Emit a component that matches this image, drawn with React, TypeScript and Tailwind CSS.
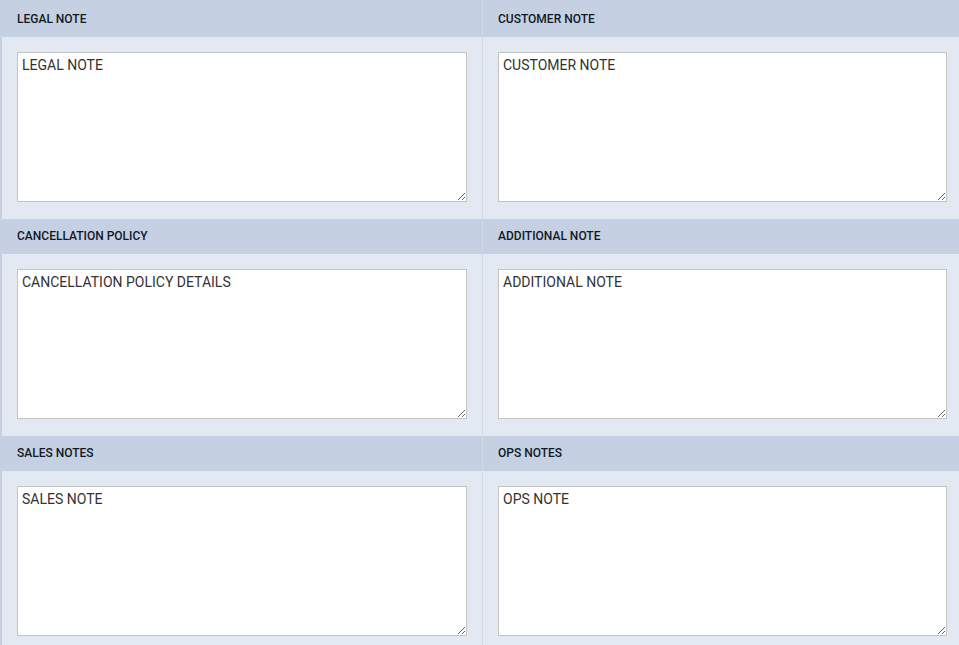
const rows = [
  [
    { title: "LEGAL NOTE", value: "LEGAL NOTE" },
    { title: "CUSTOMER NOTE", value: "CUSTOMER NOTE" },
  ],
  [
    { title: "CANCELLATION POLICY", value: "CANCELLATION POLICY DETAILS" },
    { title: "ADDITIONAL NOTE", value: "ADDITIONAL NOTE" },
  ],
  [
    { title: "SALES NOTES", value: "SALES NOTE" },
    { title: "OPS NOTES", value: "OPS NOTE" },
  ],
];

function NoteCell({
  title,
  value,
  first,
  left,
}: {
  title: string;
  value: string;
  first: boolean;
  left: boolean;
}) {
  return (
    <div
      className={
        left
          ? "flex flex-col border-l-2 border-r border-l-[#c5d1e2] border-r-[#d2dae6]"
          : "flex flex-col"
      }
    >
      <div
        className={
          first
            ? "flex h-[37px] items-center bg-[#c5d1e2] pl-[15px] text-[12px] font-medium text-[#111827]"
            : "flex h-[35px] items-center bg-[#c5d1e2] pb-px pl-[15px] text-[12px] font-medium text-[#111827]"
        }
      >
        {title}
      </div>
      <div
        className={
          left
            ? "bg-[#e2e9f3] pb-[17px] pl-[15px] pr-[15px] pt-[15px]"
            : "bg-[#e2e9f3] pb-[17px] pl-[15px] pr-[12px] pt-[15px]"
        }
      >
        <textarea
          defaultValue={value}
          className="block h-[150px] w-full border border-[#c4c4c4] bg-white px-[4px] pb-[3px] pt-[2px] text-[14px] leading-[20px] text-[#333333] outline-none"
        />
      </div>
    </div>
  );
}

export default function App() {
  return (
    <div
      className="h-[645px] w-[959px] overflow-hidden bg-[#e2e9f3]"
      style={{ fontFamily: "Roboto, 'Liberation Sans', sans-serif" }}
    >
      {rows.map((row, i) => (
        <div key={i} className="grid grid-cols-[483px_476px]">
          {row.map((cell, j) => (
            <NoteCell
              key={cell.title}
              title={cell.title}
              value={cell.value}
              first={i === 0}
              left={j === 0}
            />
          ))}
        </div>
      ))}
    </div>
  );
}
